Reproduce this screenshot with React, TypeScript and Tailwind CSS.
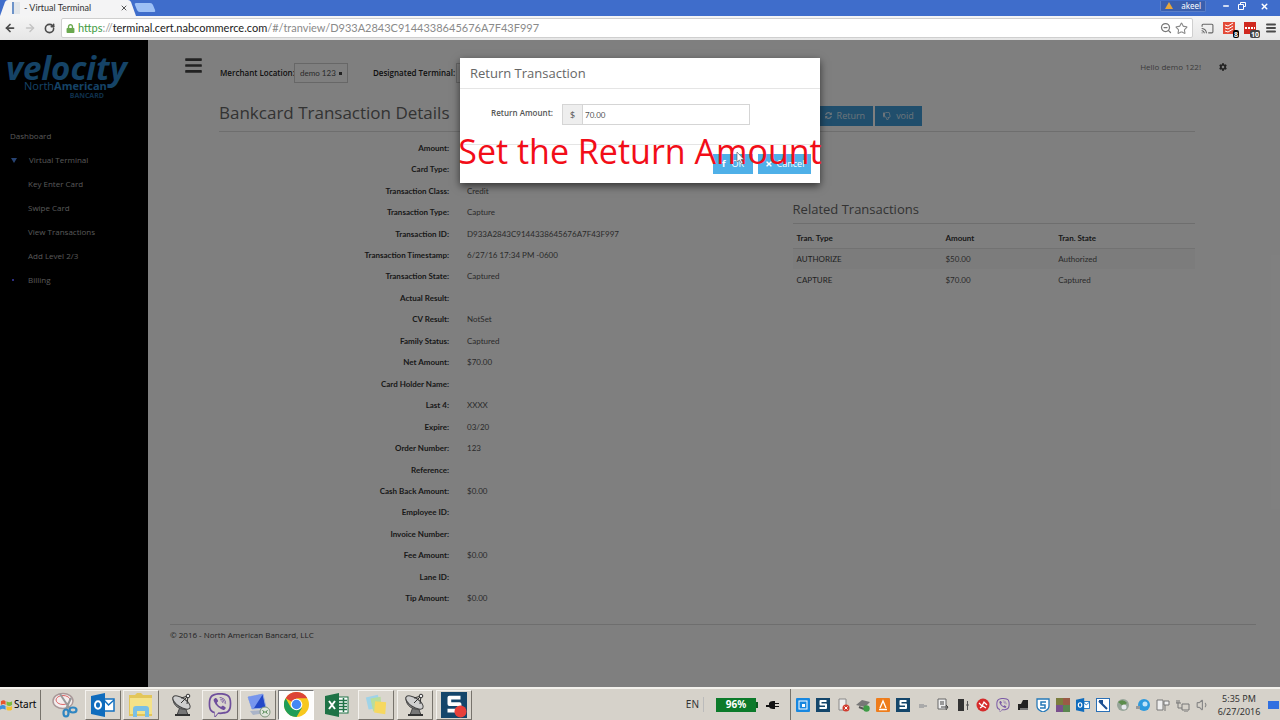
import React from "react";
import { FaBars, FaCog, FaLock, FaTimes, FaRegThumbsDown, FaSyncAlt, FaViber } from "react-icons/fa";
import { ArrowLeft, ArrowRight, RotateCw, Star, ZoomOut, Cast, Menu, X, Minus, Volume1 } from "lucide-react";

const details: [string, string][] = [
  ["Amount", ""],
  ["Card Type", ""],
  ["Transaction Class", "Credit"],
  ["Transaction Type", "Capture"],
  ["Transaction ID", "D933A2843C9144338645676A7F43F997"],
  ["Transaction Timestamp", "6/27/16 17:34 PM -0600"],
  ["Transaction State", "Captured"],
  ["Actual Result", ""],
  ["CV Result", "NotSet"],
  ["Family Status", "Captured"],
  ["Net Amount", "$70.00"],
  ["Card Holder Name", ""],
  ["Last 4", "XXXX"],
  ["Expire", "03/20"],
  ["Order Number", "123"],
  ["Reference", ""],
  ["Cash Back Amount", "$0.00"],
  ["Employee ID", ""],
  ["Invoice Number", ""],
  ["Fee Amount", "$0.00"],
  ["Lane ID", ""],
  ["Tip Amount", "$0.00"],
];

const related = [
  ["AUTHORIZE", "$50.00", "Authorized"],
  ["CAPTURE", "$70.00", "Captured"],
];

function BrowserChrome() {
  return (
    <header className="relative shrink-0 font-['Noto_Sans',sans-serif]">
      <div className="flex h-4 items-end bg-[#3f6dcb]">
        <div className="relative flex h-4 w-34 items-center">
          <svg className="absolute inset-0 h-full w-full" viewBox="0 0 136 16" preserveAspectRatio="none">
            <path d="M0 16 L5 2 Q6 0 8 0 H128 Q130 0 131 2 L136 16 Z" fill="#f4f4f5" />
          </svg>
          <span className="relative ml-3 flex h-3 w-2 border-l-2 border-[#6d93c9] bg-[#e2e6ea]" />
          <span className="relative ml-1 flex-1 text-[9px] leading-4 text-[#333] font-[Lato,sans-serif]">- Virtual Terminal</span>
          <button aria-label="Close tab" className="relative mr-2 text-[#555]">
            <X size={8} strokeWidth={3} />
          </button>
        </div>
        <button aria-label="New tab" className="mb-1 h-[9px] w-[18px] skew-x-[22deg] rounded-xs bg-[#9dc0f5]" />
        <div className="mb-1 ml-auto flex h-3 items-center gap-2 pr-[11px] text-white">
          <span className="mr-2 flex items-center gap-2 rounded-b-xs border border-t-0 border-[#5b7fc9] bg-[#3a5fae] px-1 text-[8px] leading-[10px]">
            <svg width="8" height="8" viewBox="0 0 8 8">
              <path d="M4 0 L8 7 H0 Z" fill="#e7a63a" />
            </svg>
            akeel
          </span>
          <button aria-label="Minimize">
            <Minus size={8} strokeWidth={4} />
          </button>
          <button aria-label="Restore">
            <svg width="8" height="8" viewBox="0 0 8 8" fill="none" stroke="#fff">
              <path d="M2.500 2.500V.5h5v4h-2M.5 2.500h5v5h-5z" />
            </svg>
          </button>
          <button aria-label="Close" className="ml-[6px]">
            <X size={9} strokeWidth={4} />
          </button>
        </div>
      </div>
      <div className="flex h-6 items-center bg-gradient-to-b from-[#f5f5f5] to-[#e6e6e6] pl-1 text-[#4b4b4b]">
        <button aria-label="Back" className="mr-2">
          <ArrowLeft size={12} strokeWidth={3.5} />
        </button>
        <button aria-label="Forward" className="mr-2 text-[#c4c4c4]">
          <ArrowRight size={12} strokeWidth={3} />
        </button>
        <button aria-label="Reload" className="mr-[6px]">
          <RotateCw size={11} strokeWidth={3.5} />
        </button>
        <div className="flex h-5 flex-1 items-center rounded-xs border border-[#cfcfcf] bg-white px-1 text-[11px]">
          <FaLock size={9} className="mr-[3px] text-[#6aa84f]" />
          <span className="flex-1 font-[Lato,sans-serif]">
            <span className="text-[#3f9b3f]">https</span>
            <span className="text-[#999]">://</span>
            <span className="text-[#222]">terminal.cert.nabcommerce.com</span>
            <span className="text-[#8a8a8a]">/#/tranview/D933A2843C9144338645676A7F43F997</span>
          </span>
          <ZoomOut size={12} strokeWidth={2.5} className="mr-[3px] text-[#777]" />
          <Star size={13} strokeWidth={2} className="text-[#888]" />
        </div>
        <div className="flex items-center gap-[9px] pr-[3px] pl-2">
          <Cast size={13} strokeWidth={2} className="text-[#666]" />
          <span className="relative flex h-3 w-3 bg-[#e34b39]">
            <svg viewBox="0 0 12 12" className="h-3 w-3" fill="none" stroke="#fff">
              <path d="M2 3l3 1 5-3M2 6l3 1 5-3M2 9l3 1 5-3" />
            </svg>
            <span className="absolute -right-1 -bottom-1 flex h-2 items-center rounded-xs bg-black px-px text-[7px] leading-none font-bold text-white">
              8
            </span>
          </span>
          <span className="relative flex h-3 w-3 bg-[#d0281f]">
            <svg viewBox="0 0 12 12" className="h-3 w-3" fill="#fff">
              <path d="M1 5h2v2H1zM4 5h2v2H4zM7 5h2v2H7zM10 5h1v2h-1z" />
            </svg>
            <span className="absolute -right-1 -bottom-1 flex h-2 items-center rounded-xs bg-[#444] px-px text-[7px] leading-none font-bold text-white">
              10
            </span>
          </span>
          <button aria-label="Browser menu">
            <Menu size={12} strokeWidth={4} />
          </button>
        </div>
      </div>
    </header>
  );
}

function Logo() {
  return (
    <div className="px-1 pt-2 font-['Open_Sans',sans-serif] text-[#2a86cc]">
      <div className="pl-[2px] text-[33px] leading-10 font-bold italic">velocity</div>
      <div className="-mt-2 pl-5 text-[11px] leading-3">
        North<b>American</b>
      </div>
      <div className="pr-10 text-right text-[7px] leading-[7px] font-bold text-[#1e5f94]">BANCARD</div>
    </div>
  );
}

function Sidebar() {
  const links = ["Key Enter Card", "Swipe Card", "View Transactions", "Add Level 2/3"];
  return (
    <aside className="flex w-37 shrink-0 flex-col bg-black">
      <div className="h-21">
        <Logo />
      </div>
      <nav className="flex flex-col text-[8px] leading-6 text-[#b0b0b0]">
        <a href="#dashboard" className="pl-[10px]">
          Dashboard
        </a>
        <a href="#terminal" className="flex items-center pl-[11px]">
          <svg width="6" height="5" viewBox="0 0 6 5" className="mr-3">
            <path d="M0 0h6L3 5z" fill="#4f86e6" />
          </svg>
          Virtual Terminal
        </a>
        {links.map((l) => (
          <a key={l} href="#terminal" className="pl-7">
            {l}
          </a>
        ))}
        <a href="#billing" className="flex items-center pl-3">
          <span className="mr-[14px] h-[2px] w-[2px] bg-[#5a5aff]" />
          Billing
        </a>
      </nav>
    </aside>
  );
}

function MainContent() {
  return (
    <main className="flex min-w-0 flex-1 flex-col bg-white text-[8px] text-[#444]">
      <div className="flex h-[54px] items-center pr-[53px] pl-9">
        <button aria-label="Toggle menu" className="mr-[17px] -mt-1 text-[#444]">
          <FaBars size={19} />
        </button>
        <div className="flex flex-1 items-center pt-3">
          <label htmlFor="location" className="w-[74px] font-semibold whitespace-nowrap text-[#222]">
            Merchant Location:
          </label>
          <select
            id="location"
            className="h-5 w-[54px] appearance-none border border-[#cfcfcf] bg-[linear-gradient(#444,#444)] bg-[length:3px_3px] bg-[position:right_5px_center] bg-no-repeat px-[5px] font-[Lato,sans-serif] text-[#555]"
          >
            <option>demo 123</option>
          </select>
          <label htmlFor="terminal" className="ml-[25px] font-semibold text-[#222]">
            Designated Terminal:
          </label>
          <select id="terminal" className="ml-px h-5 w-24 appearance-none border border-[#cfcfcf] px-1">
            <option></option>
          </select>
        </div>
        <span className="mr-[18px] text-[#777]">Hello demo 122!</span>
        <button aria-label="Settings">
          <FaCog size={8} />
        </button>
      </div>

      <div className="mr-[85px] ml-[71px]">
        <div className="grid h-[38px] grid-cols-[573fr_402fr] items-center border-b border-[#dcdcdc]">
          <h1 className="text-[17px] leading-6 text-[#666]">Bankcard Transaction Details</h1>
          <div className="flex gap-[2px] pt-[6px] pl-6">
            <button className="flex h-5 items-center gap-[5px] bg-[#419cd8] px-2 text-[9px] text-[#d8e8f4]">
              <FaSyncAlt size={7} />
              Return
            </button>
            <button className="flex h-5 items-center gap-[5px] bg-[#419cd8] px-2 text-[9px] text-[#d8e8f4]">
              <FaRegThumbsDown size={8} />
              void
            </button>
          </div>
        </div>

        <div className="grid grid-cols-[573fr_402fr] items-start font-[Lato,sans-serif]">
          <dl className="mt-[5px] grid h-[472px] grid-cols-[230px_1fr] items-center gap-x-[18px] leading-4">
            {details.map(([label, value]) => (
              <React.Fragment key={label}>
                <dt className="text-right font-bold text-[#333]">{label}:</dt>
                <dd className="text-[#555]">{value}</dd>
              </React.Fragment>
            ))}
          </dl>
          <section className="pt-[67px]">
            <h2 className="border-b border-[#dcdcdc] pb-1 font-['Open_Sans',sans-serif] text-[13px] leading-5 text-[#666]">
              Related Transactions
            </h2>
            <table className="mt-1 w-full table-fixed text-left">
              <thead>
                <tr className="h-5">
                  <th className="w-[38%] pl-1 font-bold text-[#333]">Tran. Type</th>
                  <th className="w-[28%] font-bold text-[#333]">Amount</th>
                  <th className="font-bold text-[#333]">Tran. State</th>
                </tr>
              </thead>
              <tbody>
                {related.map(([type, amount, state], i) => (
                  <tr key={type} className={i === 0 ? "h-[21px] border-t border-[#e4e4e4] bg-[#f9f9f9]" : "h-[21px]"}>
                    <td className="pl-1">{type}</td>
                    <td className="text-[#555]">{amount}</td>
                    <td className="text-[#555]">{state}</td>
                  </tr>
                ))}
              </tbody>
            </table>
          </section>
        </div>
      </div>

      <footer className="mt-[15px] mr-6 ml-[22px] border-t border-[#dcdcdc] leading-5">
        © 2016 - North American Bancard, LLC
      </footer>
    </main>
  );
}

function ReturnDialog() {
  return (
    <div className="absolute inset-0 flex items-start justify-center bg-black/50 pt-[18px]">
      <div
        role="dialog"
        aria-labelledby="dialog-title"
        className="relative w-90 bg-white text-[#555] shadow-[0_3px_8px_rgba(0,0,0,0.6)]"
      >
        <h2 id="dialog-title" className="border-b border-[#e5e5e5] px-[10px] pt-px text-[13px] leading-[29px] text-[#666]">
          Return Transaction
        </h2>
        <form className="flex h-[55px] items-center justify-end pr-[70px] pb-1">
          <label htmlFor="amount" className="pb-1 text-[8px] font-semibold">
            Return Amount:
          </label>
          <div className="ml-[9px] flex h-[21px] w-[188px] border border-[#d5d5d5]">
            <span className="flex w-5 items-center justify-center border-r border-[#d5d5d5] bg-[#eee] text-[9px]">$</span>
            <input
              id="amount"
              defaultValue="70.00"
              className="min-w-0 flex-1 px-[2px] font-[Lato,sans-serif] text-[8px] outline-none"
            />
          </div>
        </form>
        <div className="flex h-[39px] items-center justify-end gap-[5px] border-t border-[#e5e5e5] pr-[9px] text-[9px] text-white">
          <button className="flex h-5 w-10 items-center justify-center gap-[6px] bg-[#4fb0e8]">
            <b>f</b> OK
          </button>
          <button className="flex h-5 w-[53px] items-center justify-center gap-1 bg-[#4fb0e8]">
            <FaTimes size={8} />
            Cancel
          </button>
        </div>
        <p className="absolute top-[68px] left-1/2 -translate-x-1/2 text-[34px] leading-[50px] whitespace-nowrap text-[#f20d18]">
          Set the Return Amount
        </p>
        <svg className="absolute top-[93px] left-[276px]" width="9" height="14" viewBox="0 0 9 14">
          <path d="M1 1v10l2.500-2 2 4 1.500-1-2-3.500H8z" fill="#fff" stroke="#555" strokeWidth=".6" />
        </svg>
      </div>
    </div>
  );
}

function SnagitIcon({ dot = false, className }: { dot?: boolean; className?: string }) {
  return (
    <svg viewBox="0 0 28 28" className={className}>
      <rect width="28" height="28" fill="#14466b" />
      <path d="M21 6H9v7h11v7H7" fill="none" stroke="#fff" strokeWidth="4" strokeLinejoin="round" />
      {dot && <circle cx="21" cy="21" r="6.500" fill="#e8403a" />}
    </svg>
  );
}

function OutlookIcon({ className }: { className?: string }) {
  return (
    <svg viewBox="0 0 24 24" className={className}>
      <rect x="12" y="6" width="11" height="12" fill="#fff" stroke="#1370c0" strokeWidth="1.500" />
      <path d="M13 7l4.500 5L23 7" fill="none" stroke="#1370c0" strokeWidth="1.500" />
      <path d="M0 3l14-3v24L0 21z" fill="#0f6cbd" />
      <ellipse cx="7" cy="12" rx="3" ry="3.800" fill="none" stroke="#fff" strokeWidth="2" />
    </svg>
  );
}

function DishIcon() {
  return (
    <svg viewBox="0 0 24 24" className="h-6 w-6">
      <path d="M7 22l3-8h5l3 8z" fill="#777" stroke="#444" />
      <path d="M3 4C2 13 11 19 20 15z" fill="#8d8d8d" stroke="#444" />
      <ellipse cx="11.500" cy="9.500" rx="10" ry="4.500" transform="rotate(33 11.500 9.500)" fill="#cfcfcf" stroke="#444" />
      <path d="M11 10l7-7M18 3l-7 2M18 3l-1 8" stroke="#333" fill="none" />
      <circle cx="18" cy="3" r="1.800" fill="#eee" stroke="#333" />
      <path d="M5 22h15" stroke="#333" strokeWidth="2" />
    </svg>
  );
}

function ScissorsIcon() {
  return (
    <svg viewBox="0 0 26 26" className="h-[26px] w-[26px]">
      <ellipse cx="11" cy="9" rx="10" ry="7.500" fill="#f3eeee" stroke="#a99" strokeWidth="1.500" />
      <ellipse cx="11" cy="8" rx="7" ry="4.500" fill="none" stroke="#d66" />
      <path d="M8 2l10 15M19 6l-5 11" stroke="#999" strokeWidth="2" />
      <ellipse cx="14" cy="21" rx="2.500" ry="3.500" fill="none" stroke="#2f86c2" strokeWidth="2.200" />
      <ellipse cx="21" cy="18" rx="3.500" ry="2.500" fill="none" stroke="#2f86c2" strokeWidth="2.200" />
    </svg>
  );
}

function FolderIcon() {
  return (
    <svg viewBox="0 0 26 26" className="h-[26px] w-[26px]">
      <path d="M1 3h6l2-2h4l2 2h9v21H1z" fill="#e3c659" />
      <path d="M2 6h22v16H2z" fill="#f4e288" />
      <path d="M5 25v-8q0-3 3-3h10q3 0 3 3v8h-4v-6H9v6z" fill="#79bfe6" />
    </svg>
  );
}

function MonitorIcon() {
  return (
    <svg viewBox="0 0 26 26" className="h-[26px] w-[26px]">
      <path d="M3 5l15-3 3 14-14 1z" fill="#2348c8" stroke="#98aee0" />
      <path d="M3 5l15-3-9 14-2 1z" fill="#7795ee" />
      <path d="M5 19l13-1 3 3-13 2z" fill="#aab4c8" />
      <circle cx="20" cy="20" r="5" fill="#dfe6dc" stroke="#7d967c" />
      <path d="M17.500 18.500l2 1.500-2 1.500M22.500 18.500l-2 1.500 2 1.500" fill="none" stroke="#3d7a3d" />
    </svg>
  );
}

function ChromeIcon({ className }: { className?: string }) {
  return (
    <svg viewBox="0 0 24 24" className={className}>
      <circle cx="12" cy="12" r="12" fill="#f7c81e" />
      <path d="M12 12L1.600 6A12 12 0 0 1 22.400 6H12z" fill="#dc4437" />
      <path d="M1.600 6A12 12 0 0 0 12 24l5.200-9L12 12 6.800 15z" fill="#1f9d58" />
      <circle cx="12" cy="12" r="5.600" fill="#fff" />
      <circle cx="12" cy="12" r="4.500" fill="#4587f4" />
    </svg>
  );
}

function ExcelIcon() {
  return (
    <svg viewBox="0 0 24 24" className="h-6 w-6">
      <rect x="12" y="4" width="11" height="16" fill="#fff" stroke="#1f7246" />
      <path d="M14 7.500h8M14 10.500h8M14 13.500h8M14 16.500h8M18.500 5v14" stroke="#1f7246" strokeWidth="1.500" />
      <path d="M0 3l14-3v24L0 21z" fill="#1f7246" />
      <path d="M4 8l6 8M10 8l-6 8" stroke="#fff" strokeWidth="2" />
    </svg>
  );
}

function NotesIcon() {
  return (
    <svg viewBox="0 0 26 26" className="h-6 w-6">
      <path d="M2 5l13-3 3 14-13 2z" fill="#9fd3e8" />
      <path d="M7 6l11-2 1 14-9 2z" fill="#b8dd9c" />
      <path d="M12 9l12 1-1 13-12-2z" fill="#f6d860" />
    </svg>
  );
}

function TaskButton({
  children,
  label,
  active,
  flat,
}: {
  children: React.ReactNode;
  label: string;
  active?: boolean;
  flat?: boolean;
}) {
  const look = active
    ? "border-[#777] border-r-white border-b-white bg-[#fdfdfd]"
    : flat
      ? "border-transparent"
      : "border-[#f4f2ee] border-r-[#77736c] border-b-[#77736c] bg-[#dad6ce]";
  return (
    <button aria-label={label} className={`flex h-[30px] w-9 items-center justify-center border ${look}`}>
      {children}
    </button>
  );
}

function TrayIcons() {
  const svg = "h-[14px] w-[14px]";
  return (
    <div className="flex items-center gap-[6px]">
      <svg viewBox="0 0 14 14" className={svg}>
        <rect width="14" height="14" rx="1" fill="#1787e0" />
        <rect x="3" y="3" width="8" height="8" fill="none" stroke="#fff" />
        <rect x="6" y="6" width="3" height="3" fill="#fff" />
      </svg>
      <SnagitIcon className={svg} />
      <svg viewBox="0 0 14 14" className={svg}>
        <path d="M3 1h7v11H3z" fill="#eee" stroke="#888" />
        <circle cx="10" cy="10" r="3.500" fill="#d13b2e" />
        <path d="M8.500 8.500l3 3M11.500 8.500l-3 3" stroke="#fff" />
      </svg>
      <svg viewBox="0 0 14 14" className={svg}>
        <path d="M0 7l6-5 8 2-5 5z" fill="#777" />
        <path d="M3 9l5 2" stroke="#555" strokeWidth="2" />
        <circle cx="10.500" cy="10.500" r="3.200" fill="#3f9c46" />
      </svg>
      <svg viewBox="0 0 14 14" className={svg}>
        <rect width="14" height="14" rx="1" fill="#ee7c1b" />
        <path d="M4 10l3-7 3 7M3 11.500h8" fill="none" stroke="#fff" strokeWidth="1.300" />
      </svg>
      <SnagitIcon className={svg} />
      <svg viewBox="0 0 14 14" className={svg}>
        <path d="M3 6h5v4H3zM8 7h3v2H8z" fill="#aaa" />
      </svg>
      <svg viewBox="0 0 14 14" className={svg}>
        <path d="M2 1h8v10H2z" fill="#eee" stroke="#666" />
        <path d="M4 4h4M4 6h4M5 9h7l-2-2M12 9l-2 3" fill="none" stroke="#444" />
      </svg>
      <svg viewBox="0 0 14 14" className={svg}>
        <path d="M2 1h6v12H2z" fill="#333" />
        <path d="M11.500 3v9M10 7h3" stroke="#555" />
      </svg>
      <svg viewBox="0 0 14 14" className={svg}>
        <circle cx="7" cy="7" r="6.500" fill="#d52b2b" />
        <path d="M3 5l3 3 2-4 3 3M4 10l3-2 3 2" fill="none" stroke="#fff" strokeWidth="1.300" />
      </svg>
      <FaViber size={14} className="text-[#7b5aa6]" />
      <svg viewBox="0 0 14 14" className={svg}>
        <path d="M2 12V6h3l2-4h5v10z" fill="#222" />
        <path d="M4 12h8v-2H4z" fill="#777" />
      </svg>
      <svg viewBox="0 0 14 14" className={svg}>
        <path d="M1 1h12v7q0 4-6 6-6-2-6-6z" fill="#fff" stroke="#2679b8" strokeWidth="1.300" />
        <path d="M10 4H5v3h4v3H4" fill="none" stroke="#2679b8" strokeWidth="1.500" />
      </svg>
      <svg viewBox="0 0 14 14" className={svg}>
        <path d="M0 0h7v7H0z" fill="#7b7d3d" />
        <path d="M7 0h7v7H7z" fill="#9a5b46" />
        <path d="M0 7h7v7H0z" fill="#79508d" />
        <path d="M7 7h7v7H7z" fill="#5a8650" />
      </svg>
      <OutlookIcon className={svg} />
      <svg viewBox="0 0 14 14" className={svg}>
        <rect x=".5" y=".5" width="13" height="13" fill="#fff" stroke="#2a6fb5" />
        <path d="M3 3l8 8M3 3h3v3M8 8l3 3" stroke="#1c4f91" strokeWidth="2" fill="none" />
      </svg>
      <svg viewBox="0 0 14 14" className={svg}>
        <circle cx="7" cy="7" r="6" fill="#97a59a" />
        <path d="M2 4q5-4 9 1l-4 3z" fill="#5b8c4c" />
        <circle cx="8" cy="9" r="2.500" fill="#e7e9ef" />
      </svg>
      <svg viewBox="0 0 14 14" className={svg}>
        <circle cx="8" cy="7" r="6" fill="#2d9ade" />
        <circle cx="9" cy="6" r="2.500" fill="#bfe4fa" />
        <path d="M0 8h4v3H0z" fill="#999" />
      </svg>
      <svg viewBox="0 0 14 14" className={svg} fill="none" stroke="#777">
        <path d="M1 2h6v10H1zM8 3h5v4H8zM9 7v6" fill="#eee" />
      </svg>
      <svg viewBox="0 0 14 14" className={svg} fill="none" stroke="#777">
        <path d="M1 2v3M3 2v3M0 5h5M2 5v5h4M6 6h7v6H6zM8 14h4" />
      </svg>
      <Volume1 size={14} className="text-[#888]" />
    </div>
  );
}

function Taskbar() {
  return (
    <footer className="flex h-[33px] shrink-0 items-center border-t-2 border-[#f3f1ec] bg-[#d6d2ca] font-['Noto_Sans',sans-serif] text-[#333]">
      <button className="flex h-[30px] w-[41px] items-center gap-px border-r border-[#77736c] text-[10px] text-black">
        <svg viewBox="0 0 14 14" className="h-[14px] w-[13px]">
          <path d="M1 3q3-2 5 0v4Q4 5 1 7z" fill="#e8542c" />
          <path d="M7 3q3 2 6 0v4q-3 2-6 0z" fill="#7fbb3a" />
          <path d="M0 8q3-2 6 0v4q-3-2-6 0z" fill="#3e8fdd" />
          <path d="M7 8q3 2 6 0v4q-3 2-6 0z" fill="#f7c331" />
        </svg>
        Start
      </button>
      <div className="ml-[6px] flex gap-[5px]">
        <div className="flex gap-[2px]">
          <TaskButton label="Snipping Tool" flat>
            <ScissorsIcon />
          </TaskButton>
          <TaskButton label="Outlook">
            <OutlookIcon className="h-6 w-6" />
          </TaskButton>
          <TaskButton label="File Explorer">
            <FolderIcon />
          </TaskButton>
        </div>
        <div className="flex gap-[2px]">
          <TaskButton label="Satellite" flat>
            <DishIcon />
          </TaskButton>
          <TaskButton label="Viber">
            <FaViber size={24} className="text-[#6f4f9c]" />
          </TaskButton>
          <TaskButton label="Remote Desktop">
            <MonitorIcon />
          </TaskButton>
          <TaskButton label="Chrome" active>
            <ChromeIcon className="h-[25px] w-[25px]" />
          </TaskButton>
        </div>
        <div className="flex gap-[3px]">
          <TaskButton label="Excel" flat>
            <ExcelIcon />
          </TaskButton>
          <TaskButton label="Sticky Notes">
            <NotesIcon />
          </TaskButton>
          <TaskButton label="Satellite Viewer">
            <DishIcon />
          </TaskButton>
          <TaskButton label="Snagit">
            <SnagitIcon dot className="h-[26px] w-[26px]" />
          </TaskButton>
        </div>
      </div>
      <div className="ml-auto flex h-full items-center">
        <span className="border-r border-[#bbb] pr-1 text-[10px]">EN</span>
        <span className="ml-3 flex h-[14px] w-10 items-center justify-center bg-[#0c7a2a] text-[10px] font-bold text-white">
          96%
        </span>
        <span className="h-[6px] w-[2px] bg-[#0c5a20]" />
        <svg viewBox="0 0 14 10" className="mr-[10px] ml-2 h-[10px] w-[14px]">
          <path d="M0 5h3V3q1-2 4-2h2v2h4v1H9v2h4v1H9v2H7Q4 9 3 7H0z" fill="#111" />
        </svg>
        <div className="flex h-full items-center border-l border-[#77736c] pl-[5px]">
          <TrayIcons />
          <div className="w-[58px] text-center text-[9px] leading-[13px]">
            5:35 PM
            <br />
            6/27/2016
          </div>
          <span className="mr-px h-2 w-[11px] bg-[#2f6fe0]" />
        </div>
      </div>
    </footer>
  );
}

export default function App() {
  return (
    <div className="flex min-h-screen flex-col bg-white font-['Open_Sans','Noto_Sans',sans-serif]">
      <BrowserChrome />
      <div className="relative flex flex-1">
        <Sidebar />
        <MainContent />
        <ReturnDialog />
      </div>
      <Taskbar />
    </div>
  );
}
